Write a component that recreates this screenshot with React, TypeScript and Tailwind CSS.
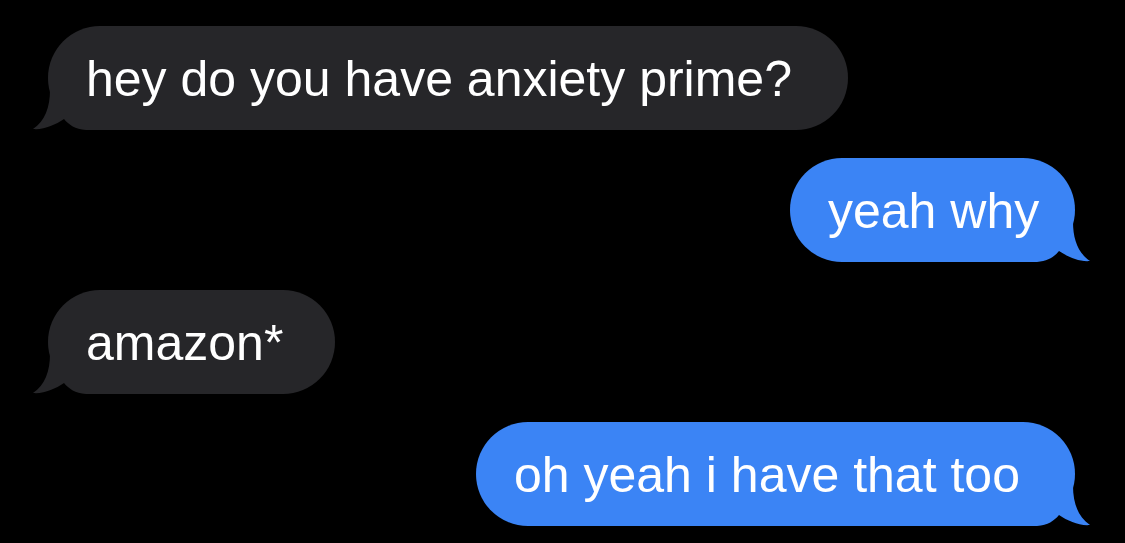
import React from 'react';

type Msg = { text: string; mine: boolean; width: string };

const messages: Msg[] = [
  { text: 'hey do you have anxiety prime?', mine: false, width: 'w-[800px]' },
  { text: 'yeah why', mine: true, width: 'w-[285px]' },
  { text: 'amazon*', mine: false, width: 'w-[287px]' },
  { text: 'oh yeah i have that too', mine: true, width: 'w-[599px]' },
];

// classic iMessage tail, drawn for the left side; mirrored for sent bubbles
const Tail = ({ color, mine }: { color: string; mine: boolean }) => (
  <svg
    width="80"
    height="40"
    viewBox="0 0 80 40"
    className={`absolute bottom-0 ${mine ? 'right-[-16px] -scale-x-100' : 'left-[-16px]'}`}
  >
    <path
      d="M18 0 C18 17, 13 31, 1 39 C12 40, 23 35, 32 29 C37 35, 43 39, 54 40 L80 40 L80 0 Z"
      fill={color}
    />
  </svg>
);

const Bubble = ({ msg }: { msg: Msg }) => {
  const color = msg.mine ? '#3b84f5' : '#262629';
  return (
    <div
      className={`relative h-[104px] rounded-[52px] pl-[38px] pt-[23px] ${msg.width} ${
        msg.mine ? 'self-end mr-[50px] bg-[#3b84f5]' : 'self-start ml-[48px] bg-[#262629]'
      }`}
    >
      <Tail color={color} mine={msg.mine} />
      <p className="relative text-[50px] leading-[60px] text-white whitespace-nowrap">{msg.text}</p>
    </div>
  );
};

export default function App() {
  return (
    <div
      className="w-[1125px] h-[543px] bg-black flex flex-col gap-[28px] pt-[26px] overflow-hidden"
      style={{ fontFamily: '"Liberation Sans", Arial, sans-serif' }}
    >
      {messages.map((m, i) => (
        <Bubble key={i} msg={m} />
      ))}
    </div>
  );
}
